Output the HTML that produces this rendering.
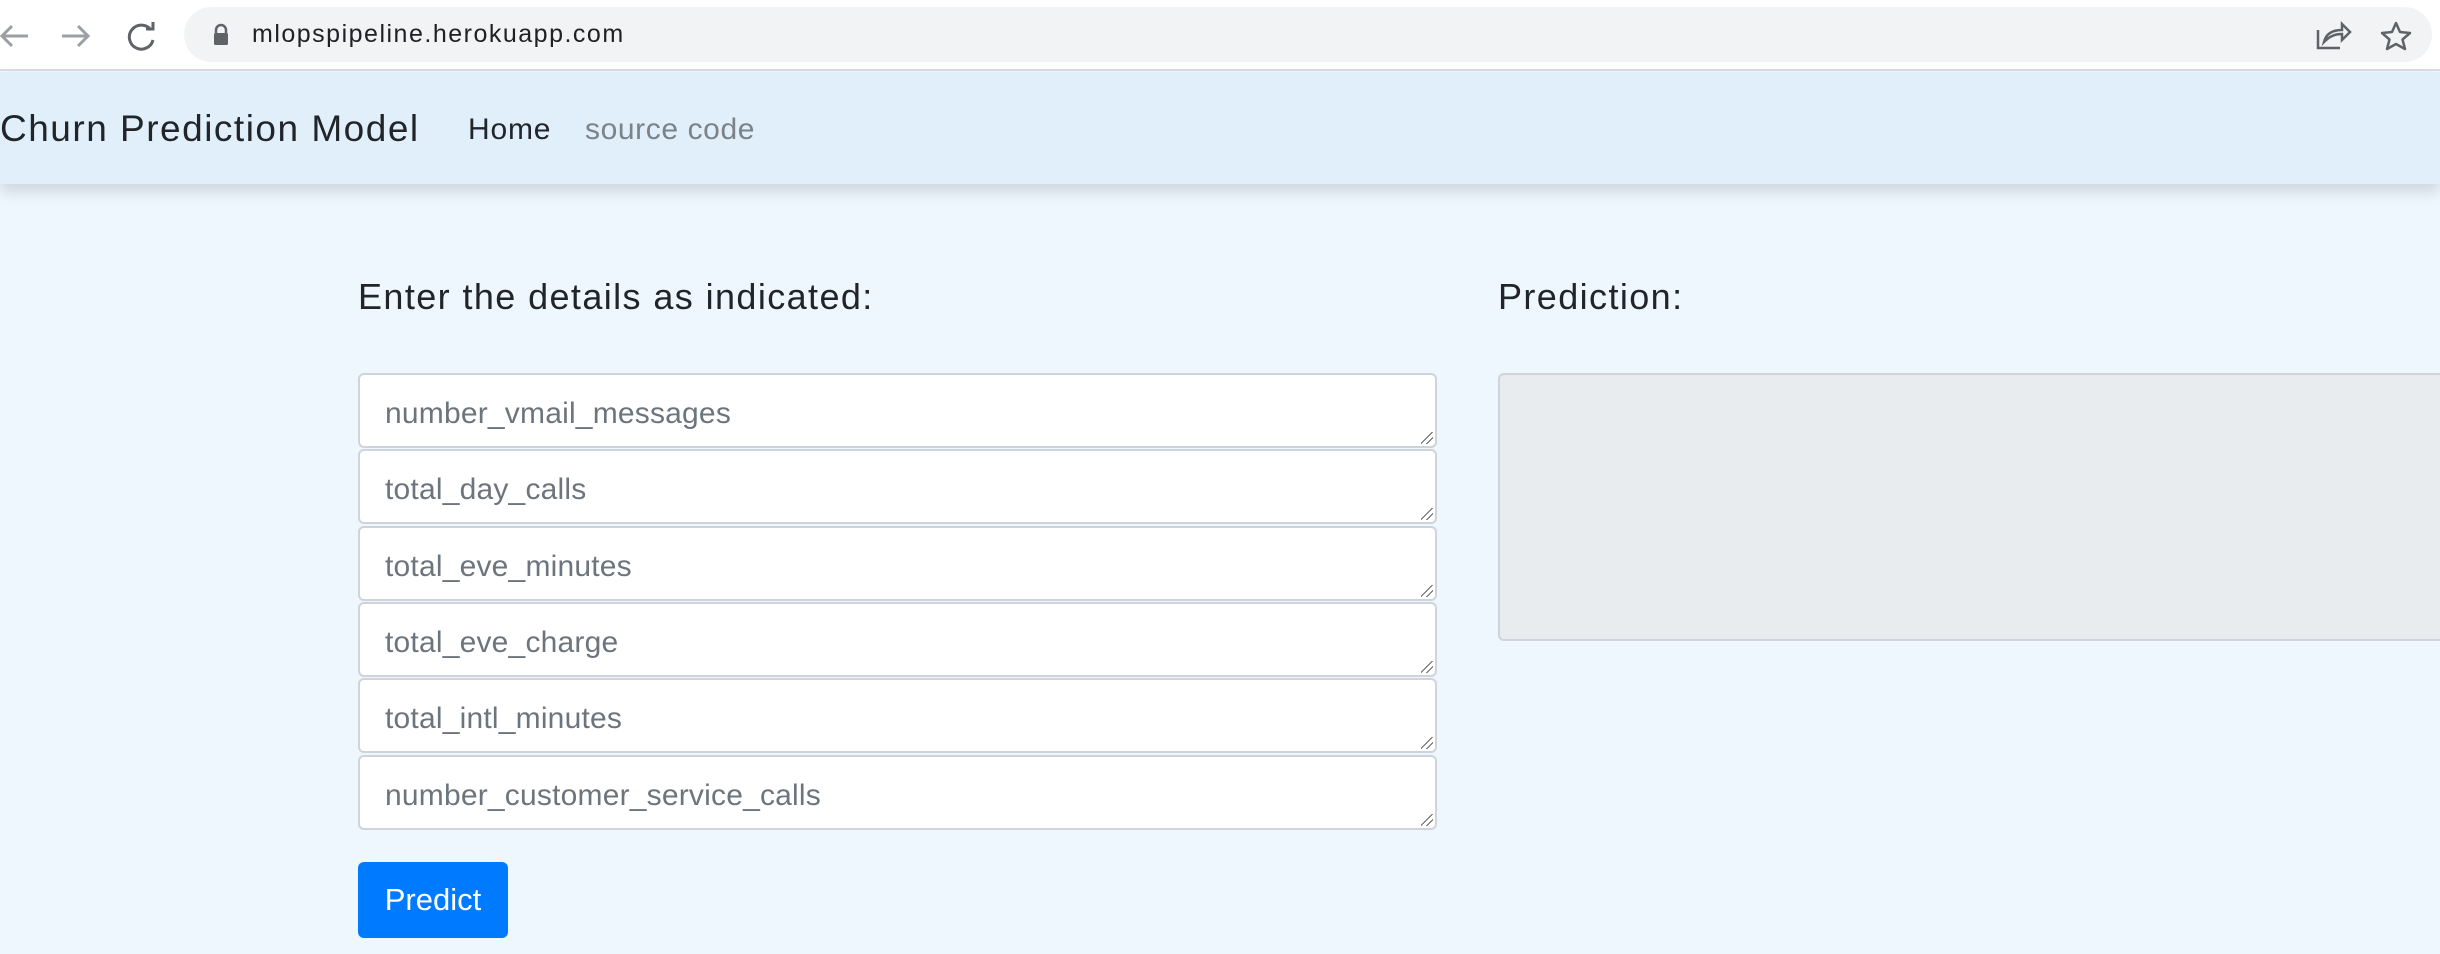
<!DOCTYPE html>
<html><head><meta charset="utf-8"><style>
*{box-sizing:border-box;margin:0;padding:0}
body{width:2440px;height:954px;overflow:hidden;background:#eef6fe;font-family:"Liberation Sans",sans-serif;position:relative}
.top{position:absolute;left:0;top:0;width:2440px;height:71px;background:#fff;border-bottom:2px solid #dadce0}
.url{position:absolute;left:184px;top:7px;width:2248px;height:55px;border-radius:28px;background:#f1f3f4}
.urltext{position:absolute;left:252px;top:20px;font-size:25px;color:#202124;letter-spacing:1.5px}
.nav{position:absolute;left:0;top:72px;width:2440px;height:112px;background:#e1effb;box-shadow:0 8px 14px rgba(0,0,0,0.13)}
.brand{position:absolute;left:0;top:108px;font-size:37px;color:#212529;letter-spacing:1.5px}
.home{position:absolute;left:468px;top:113px;font-size:30px;color:#212529;letter-spacing:0.8px}
.src{position:absolute;left:585px;top:113px;font-size:30px;color:#7b8288;letter-spacing:0.6px}
h4{position:absolute;font-weight:normal;font-size:36px;color:#212529;top:276px;letter-spacing:1.4px}
.ta{position:absolute;left:358px;width:1079px;height:75px;background:#fff;border:2px solid #ced4da;border-radius:6px;font-size:30px;color:#6c757d;padding:22px 0 0 25px;letter-spacing:0.2px}
.ta:after{content:"";position:absolute;right:2px;bottom:2px;width:12px;height:12px;background:linear-gradient(135deg,transparent 45%,#666 45%,#666 52%,transparent 52%,transparent 70%,#666 70%,#666 77%,transparent 77%)}
.pred{position:absolute;left:1498px;top:373px;width:960px;height:268px;background:#e9ecef;border:2px solid #ced4da;border-radius:6px}
.btn{position:absolute;left:358px;top:862px;width:150px;height:76px;background:#007bff;border-radius:6px;color:#fff;font-size:31px;text-align:center;line-height:76px}
</style></head><body>
<div class="top">
<svg style="position:absolute;left:0;top:18px" width="160" height="36" viewBox="0 0 160 36" fill="none" stroke-width="3">
<path d="M28 18H2M12 8L2 18l10 10" stroke="#9aa0a6"/>
<path d="M62 18h26M78 8l10 10-10 10" stroke="#9aa0a6"/>
<path d="M151 12a12 12 0 1 0 2 10" stroke="#5f6368"/><path d="M146 11h7V4" stroke="#5f6368"/>
</svg>
</div>
<div class="url"></div>
<svg style="position:absolute;left:212px;top:23px" width="18" height="24" viewBox="0 0 18 24"><path d="M4 10V7a5 5 0 0 1 10 0v3" stroke="#5f6368" stroke-width="2.5" fill="none"/><rect x="2" y="10" width="14" height="12" rx="1.5" fill="#5f6368"/></svg>
<div class="urltext">mlopspipeline.herokuapp.com</div>
<svg style="position:absolute;left:2316px;top:20px" width="100" height="32" viewBox="0 0 100 32" fill="none" stroke="#5f6368" stroke-width="2.5">
<path d="M2 10v18h22"/><path d="M8 22c2-8 8-12 18-12V4l8 8-8 8v-6c-8 0-13 3-18 8z"/>
<path d="M80 3l4 9 10 1-7.5 6.5L89 29l-9-5-9 5 2.5-9.5L66 13l10-1z" stroke-linejoin="round"/>
</svg>
<div class="nav"></div>
<div class="brand">Churn Prediction Model</div>
<div class="home">Home</div>
<div class="src">source code</div>
<h4 style="left:358px">Enter the details as indicated:</h4>
<h4 style="left:1498px">Prediction:</h4>
<div class="ta" style="top:373px">number_vmail_messages</div>
<div class="ta" style="top:449px">total_day_calls</div>
<div class="ta" style="top:526px">total_eve_minutes</div>
<div class="ta" style="top:602px">total_eve_charge</div>
<div class="ta" style="top:678px">total_intl_minutes</div>
<div class="ta" style="top:755px">number_customer_service_calls</div>
<div class="pred"></div>
<div class="btn">Predict</div>
</body></html>
